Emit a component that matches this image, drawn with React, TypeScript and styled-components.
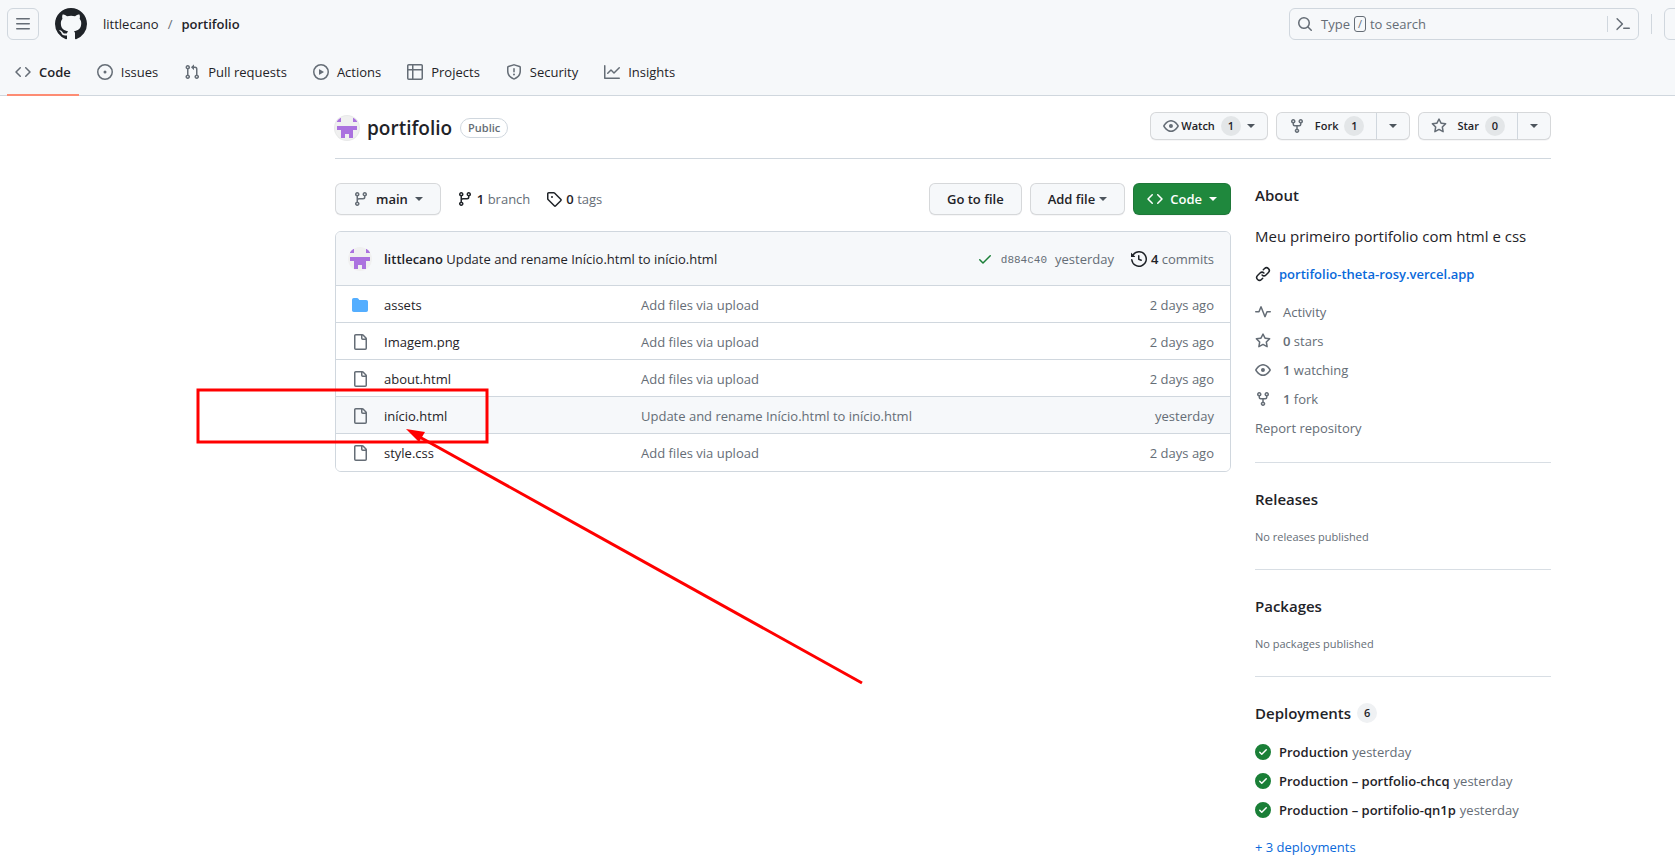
import React from 'react';
import styled, { createGlobalStyle, css } from 'styled-components';

const color = {
  text: '#1f2328',
  muted: '#656d76',
  border: '#d0d7de',
  subtle: '#f6f8fa',
  link: '#0969da',
  green: '#1f883d',
  success: '#1a7f37',
  folder: '#54aeff',
  orange: '#fd8c73',
  avatar: '#ab72df',
};

const GlobalStyle = createGlobalStyle`
  *, *::before, *::after { box-sizing: border-box; }
  html { overflow-x: hidden; }
  body {
    margin: 0;
    background: #fff;
    color: ${color.text};
    font: 400 13px/20px 'Open Sans', 'Noto Sans', sans-serif;
  }
  h1, h2, p, ul { margin: 0; padding: 0; font-weight: 400; }
  ul { list-style: none; }
  a { color: inherit; text-decoration: none; }
  a:hover { text-decoration: underline; }
  button { font: inherit; color: inherit; cursor: pointer; }
  strong { font-weight: 600; }
`;

/* ---------- icons ---------- */

const paths = {
  bars: 'M1 2.75A.75.75 0 0 1 1.75 2h12.5a.75.75 0 0 1 0 1.5H1.75A.75.75 0 0 1 1 2.75Zm0 5A.75.75 0 0 1 1.75 7h12.5a.75.75 0 0 1 0 1.5H1.75A.75.75 0 0 1 1 7.75ZM1.75 12h12.5a.75.75 0 0 1 0 1.5H1.75a.75.75 0 0 1 0-1.5Z',
  github: 'M8 0c4.42 0 8 3.58 8 8a8.013 8.013 0 0 1-5.45 7.59c-.4.08-.55-.17-.55-.38 0-.27.01-1.13.01-2.2 0-.75-.25-1.23-.54-1.48 1.78-.2 3.65-.88 3.65-3.95 0-.88-.31-1.59-.82-2.15.08-.2.36-1.02-.08-2.12 0 0-.67-.22-2.2.82-.64-.18-1.32-.27-2-.27-.68 0-1.36.09-2 .27-1.53-1.03-2.2-.82-2.2-.82-.44 1.1-.16 1.92-.08 2.12-.51.56-.82 1.28-.82 2.15 0 3.06 1.86 3.75 3.64 3.95-.23.2-.44.55-.51 1.07-.46.21-1.61.55-2.33-.66-.15-.24-.6-.83-1.23-.82-.67.01-.27.38.01.53.34.19.73.9.82 1.13.16.45.68 1.31 2.69.94 0 .67.01 1.3.01 1.49 0 .21-.15.45-.55.38A7.995 7.995 0 0 1 0 8c0-4.42 3.58-8 8-8Z',
  search: 'M10.68 11.74a6 6 0 0 1-7.922-8.982 6 6 0 0 1 8.982 7.922l3.04 3.04a.749.749 0 0 1-.326 1.275.749.749 0 0 1-.734-.215ZM11.5 7a4.499 4.499 0 1 0-8.997 0A4.499 4.499 0 0 0 11.5 7Z',
  command: 'm6.354 8.04-4.773 4.773a.75.75 0 1 0 1.061 1.06L7.945 8.57a.75.75 0 0 0 0-1.06L2.642 2.206a.75.75 0 0 0-1.06 1.061L6.353 8.04ZM8.75 11.5a.75.75 0 0 0 0 1.5h5.5a.75.75 0 0 0 0-1.5h-5.5Z',
  code: 'm11.28 3.22 4.25 4.25a.75.75 0 0 1 0 1.06l-4.25 4.25a.749.749 0 0 1-1.275-.326.749.749 0 0 1 .215-.734L13.94 8l-3.72-3.72a.749.749 0 0 1 .326-1.275.749.749 0 0 1 .734.215Zm-6.56 0a.751.751 0 0 1 1.042.018.751.751 0 0 1 .018 1.042L2.06 8l3.72 3.72a.749.749 0 0 1-.326 1.275.749.749 0 0 1-.734-.215L.47 8.53a.75.75 0 0 1 0-1.06Z',
  issue: 'M8 9.5a1.5 1.5 0 1 0 0-3 1.5 1.5 0 0 0 0 3ZM8 0a8 8 0 1 1 0 16A8 8 0 0 1 8 0ZM1.5 8a6.5 6.5 0 1 0 13 0 6.5 6.5 0 0 0-13 0Z',
  pull: 'M1.5 3.25a2.25 2.25 0 1 1 3 2.122v5.256a2.251 2.251 0 1 1-1.5 0V5.372A2.25 2.25 0 0 1 1.5 3.25Zm5.677-.177L9.573.677A.25.25 0 0 1 10 .854V2.5h1A2.5 2.5 0 0 1 13.5 5v5.628a2.251 2.251 0 1 1-1.5 0V5a1 1 0 0 0-1-1h-1v1.646a.25.25 0 0 1-.427.177L7.177 3.427a.25.25 0 0 1 0-.354ZM3.75 2.5a.75.75 0 1 0 0 1.5.75.75 0 0 0 0-1.5Zm0 9.5a.75.75 0 1 0 0 1.5.75.75 0 0 0 0-1.5Zm8.25.75a.75.75 0 1 0 1.5 0 .75.75 0 0 0-1.5 0Z',
  play: 'M8 0a8 8 0 1 1 0 16A8 8 0 0 1 8 0ZM1.5 8a6.5 6.5 0 1 0 13 0 6.5 6.5 0 0 0-13 0Zm4.879-2.773 4.264 2.559a.25.25 0 0 1 0 .428l-4.264 2.559A.25.25 0 0 1 6 10.559V5.442a.25.25 0 0 1 .379-.215Z',
  table: 'M0 1.75C0 .784.784 0 1.75 0h12.5C15.216 0 16 .784 16 1.75v12.5A1.75 1.75 0 0 1 14.25 16H1.75A1.75 1.75 0 0 1 0 14.25ZM6.5 6.5v8h7.75a.25.25 0 0 0 .25-.25V6.5Zm8-1.5V1.75a.25.25 0 0 0-.25-.25H6.5V5Zm-13 1.5v7.75c0 .138.112.25.25.25H5v-8ZM5 5V1.5H1.75a.25.25 0 0 0-.25.25V5Z',
  shield: 'M7.467.133a1.748 1.748 0 0 1 1.066 0l5.25 1.68A1.75 1.75 0 0 1 15 3.48V7c0 1.566-.32 3.182-1.303 4.682-.983 1.498-2.585 2.813-5.032 3.855a1.697 1.697 0 0 1-1.33 0c-2.447-1.042-4.049-2.357-5.032-3.855C1.32 10.182 1 8.566 1 7V3.48a1.75 1.75 0 0 1 1.217-1.667Zm.61 1.429a.25.25 0 0 0-.153 0l-5.25 1.68a.25.25 0 0 0-.174.238V7c0 1.358.275 2.666 1.057 3.86.784 1.194 2.121 2.34 4.366 3.297a.196.196 0 0 0 .154 0c2.245-.956 3.582-2.104 4.366-3.298C13.225 9.666 13.5 8.36 13.5 7V3.48a.251.251 0 0 0-.174-.237l-5.25-1.68ZM8.75 4.75v3a.75.75 0 0 1-1.5 0v-3a.75.75 0 0 1 1.5 0ZM9 10.5a1 1 0 1 1-2 0 1 1 0 0 1 2 0Z',
  graph: 'M1.5 1.75V13.5h13.75a.75.75 0 0 1 0 1.5H.75a.75.75 0 0 1-.75-.75V1.75a.75.75 0 0 1 1.5 0Zm14.28 2.53-5.25 5.25a.75.75 0 0 1-1.06 0L7 7.06 4.28 9.78a.751.751 0 0 1-1.042-.018.751.751 0 0 1-.018-1.042l3.25-3.25a.75.75 0 0 1 1.06 0L10 7.94l4.72-4.72a.751.751 0 0 1 1.042.018.751.751 0 0 1 .018 1.042Z',
  eye: 'M8 2c1.981 0 3.671.992 4.933 2.078 1.27 1.091 2.187 2.345 2.637 3.023a1.62 1.62 0 0 1 0 1.798c-.45.678-1.367 1.932-2.637 3.023C11.67 13.008 9.981 14 8 14c-1.981 0-3.671-.992-4.933-2.078C1.797 10.83.88 9.576.43 8.898a1.62 1.62 0 0 1 0-1.798c.45-.677 1.367-1.931 2.637-3.022C4.33 2.992 6.019 2 8 2ZM1.679 7.932a.12.12 0 0 0 0 .136c.411.622 1.241 1.75 2.366 2.717C5.176 11.758 6.527 12.5 8 12.5c1.473 0 2.825-.742 3.955-1.715 1.124-.967 1.954-2.096 2.366-2.717a.12.12 0 0 0 0-.136c-.412-.621-1.242-1.75-2.366-2.717C10.824 4.242 9.473 3.5 8 3.5c-1.473 0-2.825.742-3.955 1.715-1.124.967-1.954 2.096-2.366 2.717ZM8 10a2 2 0 1 1-.001-3.999A2 2 0 0 1 8 10Z',
  fork: 'M5 5.372v.878c0 .414.336.75.75.75h4.5a.75.75 0 0 0 .75-.75v-.878a2.25 2.25 0 1 1 1.5 0v.878a2.25 2.25 0 0 1-2.25 2.25h-1.5v2.128a2.251 2.251 0 1 1-1.5 0V8.5h-1.5A2.25 2.25 0 0 1 3.5 6.25v-.878a2.25 2.25 0 1 1 1.5 0ZM5 3.25a.75.75 0 1 0-1.5 0 .75.75 0 0 0 1.5 0Zm6.75.75a.75.75 0 1 0 0-1.5.75.75 0 0 0 0 1.5Zm-3 8.75a.75.75 0 1 0-1.5 0 .75.75 0 0 0 1.5 0Z',
  star: 'M8 .25a.75.75 0 0 1 .673.418l1.882 3.815 4.21.612a.75.75 0 0 1 .416 1.279l-3.046 2.97.719 4.192a.751.751 0 0 1-1.088.791L8 12.347l-3.766 1.98a.75.75 0 0 1-1.088-.79l.72-4.194L.818 6.374a.75.75 0 0 1 .416-1.28l4.21-.611L7.327.668A.75.75 0 0 1 8 .25Zm0 2.445L6.615 5.5a.75.75 0 0 1-.564.41l-3.097.45 2.24 2.184a.75.75 0 0 1 .216.664l-.528 3.084 2.769-1.456a.75.75 0 0 1 .698 0l2.77 1.456-.53-3.084a.75.75 0 0 1 .216-.664l2.24-2.183-3.096-.45a.75.75 0 0 1-.564-.41L8 2.694Z',
  branch: 'M9.5 3.25a2.25 2.25 0 1 1 3 2.122V6A2.5 2.5 0 0 1 10 8.5H6a1 1 0 0 0-1 1v1.128a2.251 2.251 0 1 1-1.5 0V5.372a2.25 2.25 0 1 1 1.5 0v1.836A2.493 2.493 0 0 1 6 7h4a1 1 0 0 0 1-1v-.628A2.25 2.25 0 0 1 9.5 3.25Zm-6 0a.75.75 0 1 0 1.5 0 .75.75 0 0 0-1.5 0Zm8.25-.75a.75.75 0 1 0 0 1.5.75.75 0 0 0 0-1.5ZM4.25 12a.75.75 0 1 0 0 1.5.75.75 0 0 0 0-1.5Z',
  tag: 'M1 7.775V2.75C1 1.784 1.784 1 2.75 1h5.025c.464 0 .91.184 1.238.513l6.25 6.25a1.75 1.75 0 0 1 0 2.474l-5.026 5.026a1.75 1.75 0 0 1-2.474 0l-6.25-6.25A1.752 1.752 0 0 1 1 7.775Zm1.5 0c0 .066.026.13.073.177l6.25 6.25a.25.25 0 0 0 .354 0l5.025-5.025a.25.25 0 0 0 0-.354l-6.25-6.25a.25.25 0 0 0-.177-.073H2.75a.25.25 0 0 0-.25.25ZM6 5a1 1 0 1 1 0 2 1 1 0 0 1 0-2Z',
  history: 'm.427 1.927 1.215 1.215a8.002 8.002 0 1 1-1.6 5.685.75.75 0 1 1 1.493-.154 6.5 6.5 0 1 0 1.18-4.458l1.358 1.358A.25.25 0 0 1 3.896 6H.25A.25.25 0 0 1 0 5.75V2.104a.25.25 0 0 1 .427-.177ZM7.75 4a.75.75 0 0 1 .75.75v2.992l2.028.812a.75.75 0 0 1-.557 1.392l-2.5-1A.751.751 0 0 1 7 8.25v-3.5A.75.75 0 0 1 7.75 4Z',
  check: 'M13.78 4.22a.75.75 0 0 1 0 1.06l-7.25 7.25a.75.75 0 0 1-1.06 0L2.22 9.28a.751.751 0 0 1 .018-1.042.751.751 0 0 1 1.042-.018L6 10.94l6.72-6.72a.75.75 0 0 1 1.06 0Z',
  folder: 'M1.75 1A1.75 1.75 0 0 0 0 2.75v10.5C0 14.216.784 15 1.75 15h12.5A1.75 1.75 0 0 0 16 13.25v-8.5A1.75 1.75 0 0 0 14.25 3H7.5a.25.25 0 0 1-.2-.1l-.9-1.2C6.07 1.26 5.55 1 5 1H1.75Z',
  file: 'M2 1.75C2 .784 2.784 0 3.75 0h6.586c.464 0 .909.184 1.237.513l2.914 2.914c.329.328.513.773.513 1.237v9.586A1.75 1.75 0 0 1 13.25 16h-9.5A1.75 1.75 0 0 1 2 14.25Zm1.75-.25a.25.25 0 0 0-.25.25v12.5c0 .138.112.25.25.25h9.5a.25.25 0 0 0 .25-.25V6h-2.75A1.75 1.75 0 0 1 9 4.25V1.5Zm6.75.062V4.25c0 .138.112.25.25.25h2.688l-.011-.013-2.914-2.914-.013-.011Z',
  link: 'm7.775 3.275 1.25-1.25a3.5 3.5 0 1 1 4.95 4.95l-2.5 2.5a3.5 3.5 0 0 1-4.95 0 .751.751 0 0 1 .018-1.042.751.751 0 0 1 1.042-.018 1.998 1.998 0 0 0 2.83 0l2.5-2.5a2.002 2.002 0 0 0-2.83-2.83l-1.25 1.25a.751.751 0 0 1-1.042-.018.751.751 0 0 1-.018-1.042Zm-4.69 9.64a1.998 1.998 0 0 0 2.83 0l1.25-1.25a.751.751 0 0 1 1.042.018.751.751 0 0 1 .018 1.042l-1.25 1.25a3.5 3.5 0 1 1-4.95-4.95l2.5-2.5a3.5 3.5 0 0 1 4.95 0 .751.751 0 0 1-.018 1.042.751.751 0 0 1-1.042.018 1.998 1.998 0 0 0-2.83 0l-2.5 2.5a1.998 1.998 0 0 0 0 2.83Z',
  pulse: 'M6 2c.306 0 .582.187.696.471L10 10.731l1.304-3.26A.751.751 0 0 1 12 7h3.25a.75.75 0 0 1 0 1.5h-2.742l-1.812 4.528a.751.751 0 0 1-1.392 0L6 4.77 4.696 8.03A.75.75 0 0 1 4 8.5H.75a.75.75 0 0 1 0-1.5h2.742l1.812-4.529A.751.751 0 0 1 6 2Z',
  done: 'M8 16A8 8 0 1 1 8 0a8 8 0 0 1 0 16Zm3.78-9.72a.751.751 0 0 0-.018-1.042.751.751 0 0 0-1.042-.018L6.75 9.19 5.28 7.72a.751.751 0 0 0-1.042.018.751.751 0 0 0-.018 1.042l2 2a.75.75 0 0 0 1.06 0Z',
};
type IconName = keyof typeof paths;

const Svg = styled.svg<{ $color?: string }>`
  display: block;
  flex: none;
  fill: ${(p) => p.$color ?? color.muted};
`;

const Icon = ({ name, size = 16, tint }: { name: IconName; size?: number; tint?: string }) => (
  <Svg viewBox="0 0 16 16" width={size} height={size} $color={tint} aria-hidden="true">
    <path d={paths[name]} />
  </Svg>
);

const Caret = styled.span<{ $color?: string }>`
  flex: none;
  border: 4px solid transparent;
  border-top-color: ${(p) => p.$color ?? '#4d555d'};
  border-bottom-width: 0;
`;

const AvatarSvg = styled.svg<{ $ring?: boolean }>`
  display: block;
  flex: none;
  border-radius: 50%;
  background: #f0f0f0;
  box-shadow: ${(p) => (p.$ring ? '0 0 0 1px rgba(31, 35, 40, 0.1)' : 'none')};
`;

const Avatar = ({ ring }: { ring?: boolean }) => (
  <AvatarSvg viewBox="0 0 12 12" width={24} height={24} $ring={ring} shapeRendering="crispEdges" aria-hidden="true">
    <path fill={color.avatar} d="M1 1h2v2H1zM9 1h2v2H9zM1 5h10v2H9v4H7V9H5v2H3V7H1z" />
  </AvatarSvg>
);

/* ---------- page header ---------- */

const Page = styled.div`
  position: relative;
  overflow: hidden;
`;

const Header = styled.header`
  background: ${color.subtle};
  border-bottom: 1px solid ${color.border};
`;

const TopBar = styled.div`
  display: flex;
  align-items: center;
  height: 48px;
  padding-left: 7px;
`;

const SquareButton = styled.button`
  display: grid;
  place-items: center;
  flex: none;
  width: 32px;
  height: 32px;
  padding: 0;
  border: 1px solid ${color.border};
  border-radius: 6px;
  background: transparent;
`;

const HomeLink = styled.a`
  margin: 0 8px 0 16px;
`;

const Breadcrumb = styled.nav`
  display: flex;
  gap: 9px;
  margin: 0 auto 0 8px;
`;

const Slash = styled.span`
  color: ${color.muted};
`;

const SearchBox = styled.div`
  display: flex;
  align-items: center;
  width: 350px;
  height: 32px;
  border: 1px solid ${color.border};
  border-radius: 6px;
`;

const SearchTrigger = styled.button`
  display: flex;
  align-items: center;
  flex: 1;
  gap: 4px;
  height: 30px;
  padding: 0 7px;
  border: 0;
  background: none;
  color: ${color.muted};
`;

const SearchIcon = styled.span`
  margin-right: 4px;
`;

const Key = styled.kbd`
  width: 12px;
  height: 16px;
  border: 1px solid ${color.muted};
  border-radius: 3px;
  font: 11px/14px 'Open Sans', sans-serif;
  text-align: center;
`;

const PaletteButton = styled.button`
  height: 16px;
  padding: 0 7px;
  border: 0;
  border-left: 1px solid ${color.border};
  background: none;
`;

const Divider = styled.span`
  width: 1px;
  height: 20px;
  margin: 0 12px;
  background: ${color.border};
`;

const EdgeButton = styled(SquareButton)`
  margin-right: -21px;
`;

const Tabs = styled.nav`
  display: flex;
  gap: 10px;
  height: 48px;
  margin-bottom: -1px;
  padding: 0 7px;
`;

const Tab = styled.a<{ $active?: boolean }>`
  display: flex;
  align-items: center;
  gap: 8px;
  padding: 2px 8px 0;
  border-bottom: 2px solid ${(p) => (p.$active ? color.orange : 'transparent')};
  font-weight: ${(p) => (p.$active ? 600 : 400)};
`;

/* ---------- shared controls ---------- */

const buttonLook = css`
  border: 1px solid rgba(31, 35, 40, 0.15);
  border-radius: 6px;
  background: ${color.subtle};
  box-shadow: 0 1px 0 rgba(31, 35, 40, 0.04);
  font-weight: 600;
`;

const Button = styled.button<{ $primary?: boolean; $tight?: boolean }>`
  ${buttonLook}
  display: flex;
  align-items: center;
  justify-content: center;
  gap: ${(p) => (p.$tight ? 4 : 7)}px;
  height: 32px;
  padding: 0 17px;
  white-space: nowrap;
  ${(p) => p.$primary && css`
    padding: 0 13px;
    background: ${color.green};
    color: #fff;
  `}
`;

const ButtonGroup = styled.div`
  ${buttonLook}
  display: flex;
  height: 28px;
`;

const SmallButton = styled.button<{ $gap: number }>`
  display: flex;
  align-items: center;
  gap: 6px;
  padding: 0 12px;
  border: 0;
  background: none;
  font-size: 11px;
  font-weight: 600;

  & > svg { margin-right: ${(p) => p.$gap}px; }
`;

const MenuButton = styled.button`
  display: grid;
  place-items: center;
  width: 33px;
  padding: 0;
  border: 0;
  border-left: 1px solid ${color.border};
  background: none;
`;

const Counter = styled.span<{ $plain?: boolean }>`
  min-width: 20px;
  height: 20px;
  padding: 0 6px;
  border-radius: 10px;
  background: ${(p) => (p.$plain ? '#eff1f3' : '#e3e6e8')};
  font-size: 11px;
  font-weight: 600;
  line-height: 20px;
  text-align: center;
`;

/* ---------- repository ---------- */

const Repository = styled.div`
  margin: 0 124px 0 335px;
`;

const TitleBar = styled.div`
  display: flex;
  align-items: flex-start;
  gap: 8px;
  height: 63px;
  padding-top: 16px;
  border-bottom: 1px solid ${color.border};
`;

const TitleGroup = styled.div`
  display: flex;
  align-items: center;
  gap: 8px;
  height: 31px;
  margin-right: auto;
`;

const Title = styled.h1`
  font-size: 19px;
  font-weight: 600;
  line-height: 30px;
`;

const Visibility = styled.span`
  padding: 0 7px;
  border: 1px solid ${color.border};
  border-radius: 10px;
  color: ${color.muted};
  font-size: 11px;
  font-weight: 600;
  line-height: 18px;
`;

const Columns = styled.div`
  display: grid;
  grid-template-columns: minmax(0, 1fr) 296px;
  gap: 24px;
  padding-top: 24px;
`;

const Toolbar = styled.div`
  display: flex;
  align-items: center;
  gap: 8px;
  margin-bottom: 16px;
`;

const RefStats = styled.div`
  display: flex;
  gap: 16px;
  margin: 0 auto 0 8px;
`;

const Stat = styled.a`
  display: flex;
  align-items: center;
  gap: 4px;
  color: ${color.muted};

  strong { color: ${color.text}; }
`;

const FileBox = styled.section`
  border: 1px solid ${color.border};
  border-radius: 6px;
  overflow: hidden;
`;

const CommitBar = styled.div`
  display: flex;
  align-items: center;
  height: 53px;
  padding: 0 16px 0 12px;
  background: ${color.subtle};
`;

const CommitMessage = styled.p`
  margin: 0 auto 0 12px;
`;

const CommitMeta = styled.div`
  display: flex;
  align-items: center;
  gap: 8px;
  margin-right: 17px;
  color: ${color.muted};
`;

const Sha = styled.a`
  padding-top: 2px;
  font: 11px/20px 'Liberation Mono', monospace;
`;

const FileTable = styled.table`
  width: 100%;
  table-layout: fixed;
  border-collapse: collapse;
`;

const FileRow = styled.tr<{ $hovered?: boolean }>`
  height: 37px;
  border-top: 1px solid ${color.border};
  background: ${(p) => (p.$hovered ? color.subtle : '#fff')};
`;

const FileCell = styled.td<{ $width?: number; $muted?: boolean; $end?: boolean }>`
  width: ${(p) => (p.$width ? `${p.$width}px` : 'auto')};
  padding: 2px 16px 0 0;
  color: ${(p) => (p.$muted ? color.muted : color.text)};
  text-align: ${(p) => (p.$end ? 'right' : 'left')};
`;

const FileName = styled.div`
  display: flex;
  align-items: center;
  gap: 16px;
  padding-left: 16px;
`;

/* ---------- sidebar ---------- */

const Section = styled.section`
  padding-bottom: 24px;

  & + & {
    padding-top: 24px;
    border-top: 1px solid #d8dee4;
  }
`;

const SectionTitle = styled.h2`
  display: flex;
  align-items: center;
  gap: 6px;
  margin-bottom: 17px;
  font-size: 15px;
  font-weight: 600;
  line-height: 24px;
`;

const Description = styled.p`
  margin-bottom: 16px;
  font-size: 15px;
  line-height: 24px;
`;

const Website = styled.a`
  display: flex;
  align-items: center;
  gap: 8px;
  margin-bottom: 18px;
  color: ${color.link};
  font-weight: 600;
`;

const Facts = styled.ul`
  display: grid;
  gap: 9px;
  color: ${color.muted};
`;

const Fact = styled.a`
  display: flex;
  align-items: center;
  gap: 12px;
`;

const Note = styled.p`
  color: ${color.muted};
  font-size: 11px;
  line-height: 17px;
`;

const Deployments = styled.ul`
  display: grid;
  gap: 9px;
  margin-bottom: 17px;
`;

const Deployment = styled.li`
  display: flex;
  align-items: center;
  gap: 4px;
  color: ${color.muted};

  strong { color: ${color.text}; }
  svg { margin-right: 4px; }
`;

const MoreLink = styled.a`
  color: ${color.link};
`;

/* ---------- annotation over the page ---------- */

const Annotation = styled.svg`
  position: absolute;
  top: 0;
  left: 0;
  pointer-events: none;
`;

/* ---------- data ---------- */

const tabs: { icon: IconName; label: string }[] = [
  { icon: 'code', label: 'Code' },
  { icon: 'issue', label: 'Issues' },
  { icon: 'pull', label: 'Pull requests' },
  { icon: 'play', label: 'Actions' },
  { icon: 'table', label: 'Projects' },
  { icon: 'shield', label: 'Security' },
  { icon: 'graph', label: 'Insights' },
];

const files = [
  { name: 'assets', message: 'Add files via upload', age: '2 days ago', folder: true },
  { name: 'Imagem.png', message: 'Add files via upload', age: '2 days ago' },
  { name: 'about.html', message: 'Add files via upload', age: '2 days ago' },
  { name: 'início.html', message: 'Update and rename Início.html to início.html', age: 'yesterday', hovered: true },
  { name: 'style.css', message: 'Add files via upload', age: '2 days ago' },
];

const facts: { icon: IconName; count?: number; label: string }[] = [
  { icon: 'pulse', label: 'Activity' },
  { icon: 'star', count: 0, label: 'stars' },
  { icon: 'eye', count: 1, label: 'watching' },
  { icon: 'fork', count: 1, label: 'fork' },
];

const deployments = ['Production', 'Production – portfolio-chcq', 'Production – portifolio-qn1p'];

export default function App() {
  return (
    <Page>
      <GlobalStyle />
      <Header>
        <TopBar>
          <SquareButton aria-label="Open menu"><Icon name="bars" /></SquareButton>
          <HomeLink href="#" aria-label="Home"><Icon name="github" size={32} tint={color.text} /></HomeLink>
          <Breadcrumb aria-label="Breadcrumb">
            <a href="#">littlecano</a>
            <Slash>/</Slash>
            <a href="#"><strong>portifolio</strong></a>
          </Breadcrumb>
          <SearchBox>
            <SearchTrigger>
              <SearchIcon><Icon name="search" /></SearchIcon>
              Type <Key>/</Key> to search
            </SearchTrigger>
            <PaletteButton aria-label="Command palette"><Icon name="command" /></PaletteButton>
          </SearchBox>
          <Divider />
          <EdgeButton aria-label="Create new" />
        </TopBar>
        <Tabs aria-label="Repository">
          {tabs.map((tab, index) => (
            <Tab key={tab.label} href="#" $active={index === 0}>
              <Icon name={tab.icon} />
              {tab.label}
            </Tab>
          ))}
        </Tabs>
      </Header>

      <Repository>
        <TitleBar>
          <TitleGroup>
            <Avatar ring />
            <Title><a href="#">portifolio</a></Title>
            <Visibility>Public</Visibility>
          </TitleGroup>
          <ButtonGroup>
            <SmallButton $gap={-4}>
              <Icon name="eye" />Watch<Counter>1</Counter><Caret />
            </SmallButton>
          </ButtonGroup>
          <ButtonGroup>
            <SmallButton $gap={4}><Icon name="fork" />Fork<Counter>1</Counter></SmallButton>
            <MenuButton aria-label="Fork options"><Caret /></MenuButton>
          </ButtonGroup>
          <ButtonGroup>
            <SmallButton $gap={4}><Icon name="star" />Star<Counter>0</Counter></SmallButton>
            <MenuButton aria-label="Star options"><Caret /></MenuButton>
          </ButtonGroup>
        </TitleBar>

        <Columns>
          <main>
            <Toolbar>
              <Button><Icon name="branch" />main<Caret /></Button>
              <RefStats>
                <Stat href="#"><Icon name="branch" tint={color.text} /><span><strong>1</strong> branch</span></Stat>
                <Stat href="#"><Icon name="tag" tint={color.text} /><span><strong>0</strong> tags</span></Stat>
              </RefStats>
              <Button>Go to file</Button>
              <Button $tight>Add file<Caret /></Button>
              <Button $primary><Icon name="code" tint="#fff" />Code<Caret $color="#fff" /></Button>
            </Toolbar>

            <FileBox>
              <CommitBar>
                <Avatar />
                <CommitMessage>
                  <a href="#"><strong>littlecano</strong></a> <a href="#">Update and rename Início.html to início.html</a>
                </CommitMessage>
                <CommitMeta>
                  <Icon name="check" tint={color.success} />
                  <Sha href="#">d884c40</Sha>
                  <a href="#">yesterday</a>
                </CommitMeta>
                <Stat href="#"><Icon name="history" tint={color.text} /><span><strong>4</strong> commits</span></Stat>
              </CommitBar>
              <FileTable aria-label="Files">
                <tbody>
                  {files.map((file) => (
                    <FileRow key={file.name} $hovered={file.hovered}>
                      <FileCell $width={305}>
                        <FileName>
                          <Icon name={file.folder ? 'folder' : 'file'} tint={file.folder ? color.folder : undefined} />
                          <a href="#">{file.name}</a>
                        </FileName>
                      </FileCell>
                      <FileCell $muted><a href="#">{file.message}</a></FileCell>
                      <FileCell $width={120} $muted $end>{file.age}</FileCell>
                    </FileRow>
                  ))}
                </tbody>
              </FileTable>
            </FileBox>
          </main>

          <aside>
            <Section>
              <SectionTitle>About</SectionTitle>
              <Description>Meu primeiro portifolio com html e css</Description>
              <Website href="#"><Icon name="link" tint={color.text} />portifolio-theta-rosy.vercel.app</Website>
              <Facts>
                {facts.map((fact) => (
                  <li key={fact.label}>
                    <Fact href="#">
                      <Icon name={fact.icon} />
                      <span>{fact.count !== undefined && <strong>{fact.count} </strong>}{fact.label}</span>
                    </Fact>
                  </li>
                ))}
                <li><a href="#">Report repository</a></li>
              </Facts>
            </Section>
            <Section>
              <SectionTitle>Releases</SectionTitle>
              <Note>No releases published</Note>
            </Section>
            <Section>
              <SectionTitle>Packages</SectionTitle>
              <Note>No packages published</Note>
            </Section>
            <Section>
              <SectionTitle>Deployments <Counter $plain>6</Counter></SectionTitle>
              <Deployments>
                {deployments.map((name) => (
                  <Deployment key={name}>
                    <Icon name="done" tint={color.success} />
                    <strong>{name}</strong> yesterday
                  </Deployment>
                ))}
              </Deployments>
              <MoreLink href="#">+ 3 deployments</MoreLink>
            </Section>
          </aside>
        </Columns>
      </Repository>

      <Annotation width="900" height="700" viewBox="0 0 900 700" aria-hidden="true">
        <rect x="198" y="390" width="289" height="52" fill="none" stroke="#f00" strokeWidth="3" />
        <path d="M862 683 416 435" stroke="#f00" strokeWidth="3" />
        <path d="M406 429l19 3-6 10z" fill="#f00" />
      </Annotation>
    </Page>
  );
}
